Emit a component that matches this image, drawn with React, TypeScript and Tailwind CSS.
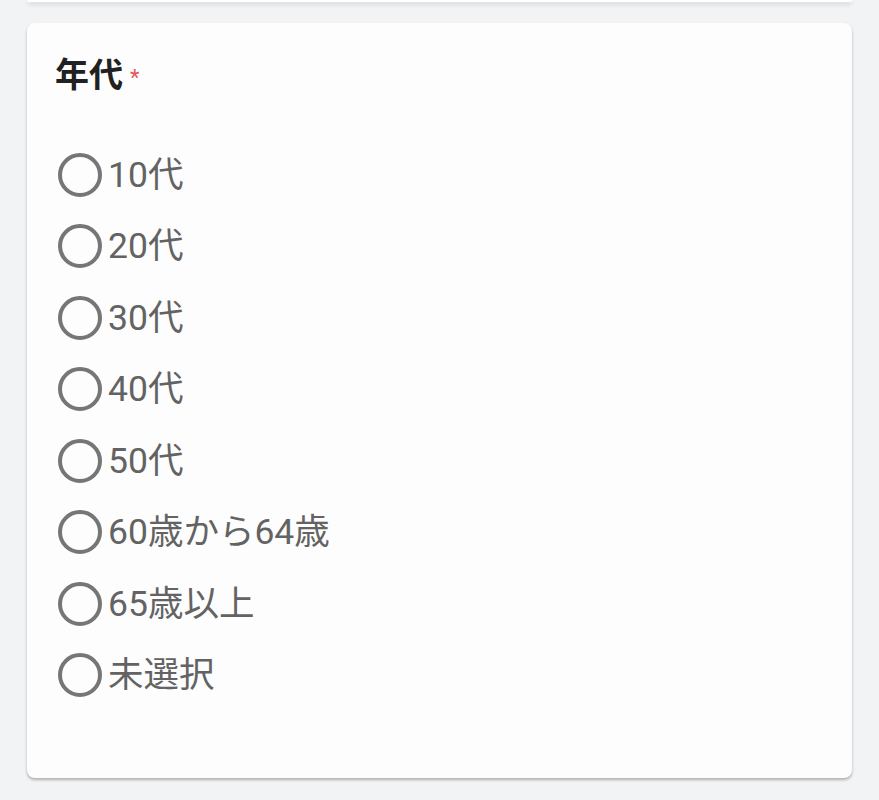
const options = ['10代', '20代', '30代', '40代', '50代', '60歳から64歳', '65歳以上', '未選択']

export default function App() {
  return (
    <div
      className="min-h-[800px] w-full bg-[#f2f3f5] px-[27px]"
      style={{ fontFamily: 'Roboto, "Noto Sans CJK JP", sans-serif' }}
    >
      <div className="h-[2px] rounded-b-lg bg-white shadow-[0_2px_4px_rgba(0,0,0,0.18)]" />

      <div className="mt-[21px] rounded-lg bg-[#fdfdfd] px-[28px] pb-[67px] pt-[32px] shadow-[0_2px_3px_rgba(0,0,0,0.28)]">
        <div className="flex items-start h-[40px]">
          <span className="text-[34px] font-bold leading-[40px] text-[#212121]">年代</span>
          <span className="ml-[7px] mt-[12px] text-[22px] leading-[22px] text-[#e05757]">*</span>
        </div>

        <div className="mt-[44px] flex flex-col">
          {options.map((o) => (
            <label key={o} className="flex h-[71.5px] items-center">
              <span className="ml-[3px] h-[44px] w-[44px] shrink-0 rounded-full border-[4px] border-[#767676]" />
              <span className="ml-[6px] text-[35.5px] leading-[40px] text-[#636363]">{o}</span>
            </label>
          ))}
        </div>
      </div>
    </div>
  )
}
